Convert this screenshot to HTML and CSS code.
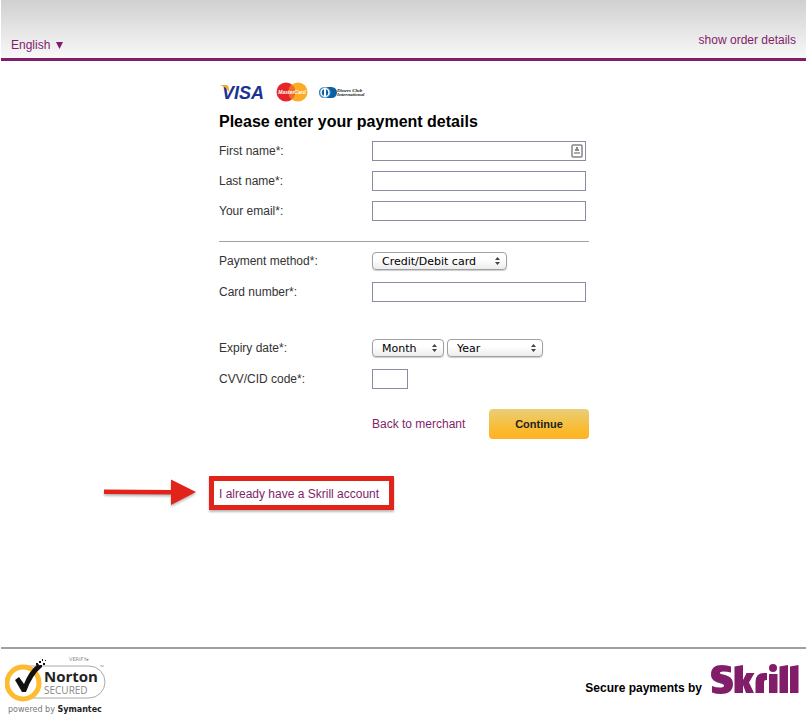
FILE: index.html
```html
<!DOCTYPE html>
<html lang="en">
<head>
<meta charset="utf-8">
<title>Skrill payment</title>
<link rel="stylesheet" href="styles.css">
</head>
<body>
<header class="top">
  <a class="language" href="#">English
    <svg width="7" height="7" viewBox="0 0 7 7" aria-hidden="true"><path d="M0 0h7L3.500 7z" fill="#821e69"/></svg>
  </a>
  <a class="order" href="#">show order details</a>
</header>
<main class="payment">
  <div class="brands">
    <svg width="46" height="20" viewBox="0 0 46 20" role="img" aria-label="Visa">
      <text x="3" y="17" class="visa">VISA</text>
      <path d="M1 3h6q2 0 2.500 2l1 5Q7 5 1 3z" fill="#f5a623"/>
    </svg>
    <svg width="32" height="20" viewBox="0 0 32 20" role="img" aria-label="MasterCard">
      <circle cx="10" cy="10" r="9.500" fill="#e5252a"/>
      <circle cx="22" cy="10" r="9.500" fill="#fbab26"/>
      <path d="M16 2.600a9.500 9.500 0 0 1 0 14.800a9.500 9.500 0 0 1 0-14.800" fill="#f26a25"/>
      <text x="16" y="12" class="mastercard">MasterCard</text>
    </svg>
    <svg width="46" height="20" viewBox="0 0 46 20" role="img" aria-label="Diners Club International">
      <rect x="0" y="5" width="18" height="11" rx="5.500" fill="#0b5fa5"/>
      <circle cx="6" cy="10.500" r="5" fill="#fff" stroke="#7fb0d6"/>
      <path d="M5 7.200a3.500 3.500 0 0 0 0 6.600zM7 7.200a3.500 3.500 0 0 1 0 6.600z" fill="#0b5fa5"/>
      <text x="18" y="10" class="diners">Diners Club</text>
      <text x="18" y="14" class="diners">International</text>
    </svg>
  </div>
  <h1>Please enter your payment details</h1>
  <form>
    <div class="row">
      <label for="first">First name*:</label>
      <div class="field">
        <input id="first" type="text">
        <svg class="contact" width="12" height="14" viewBox="0 0 12 14" aria-hidden="true">
          <rect x="1" y="1" width="10" height="12" rx="1" fill="#fff" stroke="#858585" stroke-width="1.500"/>
          <path d="M5 3h2v2h1v2H4V5h1z" fill="#8b8b8b"/><path d="M3 8h6v2H3z" fill="#aaa"/>
        </svg>
      </div>
    </div>
    <div class="row"><label for="last">Last name*:</label><input id="last" type="text"></div>
    <div class="row"><label for="email">Your email*:</label><input id="email" type="email"></div>
    <hr>
    <div class="row">
      <label for="method">Payment method*:</label>
      <div class="choice method"><select id="method"><option>Credit/Debit card</option></select><svg width="5" height="8" viewBox="0 0 5 8" aria-hidden="true"><path d="M0 3L2.500 0 5 3zM0 5h5L2.500 8z" fill="#444"/></svg></div>
    </div>
    <div class="row card"><label for="card">Card number*:</label><input id="card" type="text"></div>
    <div class="row expiry">
      <label for="month">Expiry date*:</label>
      <div class="dates">
        <div class="choice month"><select id="month"><option>Month</option></select><svg width="5" height="8" viewBox="0 0 5 8" aria-hidden="true"><path d="M0 3L2.500 0 5 3zM0 5h5L2.500 8z" fill="#444"/></svg></div>
        <div class="choice year"><select aria-label="Expiry year"><option>Year</option></select><svg width="5" height="8" viewBox="0 0 5 8" aria-hidden="true"><path d="M0 3L2.500 0 5 3zM0 5h5L2.500 8z" fill="#444"/></svg></div>
      </div>
    </div>
    <div class="row cvv"><label for="cvv">CVV/CID code*:</label><input id="cvv" class="short" type="text"></div>
    <div class="actions">
      <a href="#">Back to merchant</a>
      <button type="submit">Continue</button>
    </div>
  </form>
  <div class="account">
    <a href="#">I already have a Skrill account</a>
    <svg class="arrow" width="96" height="32" viewBox="0 0 96 32" aria-hidden="true">
      <path d="M1 13.500L68 14V3.500L93 16 68 29V18.500L1 18z" fill="#e2231a"/>
    </svg>
  </div>
</main>
<footer class="bottom">
  <svg class="norton" width="102" height="60" viewBox="0 0 102 60" role="img" aria-label="Norton Secured, powered by Symantec">
    <path d="M20 10H84a16 16 0 0 1 0 32H20" fill="#fff" stroke="#aaa"/>
    <circle cx="18" cy="27" r="16" fill="#fff" stroke="#fdbb30" stroke-width="5"/>
    <path d="M10 24l4-3 5 7Q24 15 33 8l4 3Q27 19 21 36h-4z" fill="#111"/>
    <path d="M31 7h2v2h-2zM34 5h2v2h-2zM37 3h1v2h-1zM38 7h2v2h-2zM35 9h2v2h-2zM40 4h1v1h-1z" fill="#111"/>
    <text x="64" y="5" class="verify">VERIFY▸</text>
    <text x="95" y="13" class="tm">™</text>
    <text x="39" y="26" class="norton-name">Norton</text>
    <text x="39" y="38" class="secured">SECURED</text>
    <text x="3" y="56" class="powered">powered by <tspan class="symantec">Symantec</tspan></text>
  </svg>
  <div class="secure">
    <strong>Secure payments by</strong>
    <svg width="88" height="30" viewBox="0 0 88 30" role="img" aria-label="Skrill" fill="#821e69">
      <path d="M20 2.500v6Q16 7.500 12 7.500 9 7.500 9 9C9 11.500 22 9.500 22 20 22 27 17 30 10 30Q5 30 1 28.500V22Q5 23.500 9 23.500 13 23.500 13 21.500C13 18.500 0 20 0 10.500 0 4 4 1 11 1Q16 1 20 2.500z"/>
      <path d="M23.500 2.500L32 1v15l3.500-7h8l-5.500 9.500L43 29h-8l-3-8v8h-8.500z"/>
      <path d="M44.500 29V18Q44.500 9 53 9h3v7h-1q-2 0-2 2v11z"/>
      <circle cx="62" cy="4" r="4"/>
      <path d="M58 10h8.500v19H58zM68.500 2.500L77 1v28h-8.500zM79 2.500L87.500 1v28H79z"/>
    </svg>
  </div>
</footer>
</body>
</html>
```
FILE: styles.css
```css
* { box-sizing: border-box; }
body {
  display: flex;
  flex-direction: column;
  min-height: 100vh;
  margin: 0 3px 0 1px;
  background: #fff;
  color: #333;
  font: 12px/16px "Liberation Sans", Arial, sans-serif;
}
a { color: #821e69; text-decoration: none; }
.top {
  display: flex;
  justify-content: space-between;
  align-items: flex-end;
  height: 61px;
  padding: 0 10px;
  background: linear-gradient(#d0d0d0, #f8f8f8);
  border-bottom: 3px solid #821e69;
}
.language { padding-bottom: 5px; }
.language svg { margin-left: 2px; }
.order { padding-bottom: 10px; }
.payment {
  flex: 1;
  width: 100%;
  max-width: 371px;
  margin: 0 auto;
  padding: 21px 0 0 1px;
}
.brands { display: flex; gap: 11px; height: 20px; }
.brands svg { overflow: visible; }
.visa { font: italic bold 18px "Liberation Sans", sans-serif; fill: #1a3491; }
.mastercard { font: italic bold 5px "Liberation Sans", sans-serif; fill: #fff; text-anchor: middle; }
.diners { font: italic bold 5px "Liberation Serif", serif; fill: #222; }
h1 { margin: 10px 0 4px; color: #000; font-size: 16px; line-height: 20px; }
.row {
  display: grid;
  grid-template-columns: 153px 1fr;
  align-items: center;
  height: 30px;
}
label { padding-bottom: 1px; }
input {
  display: block;
  width: 214px;
  height: 20px;
  margin: 0;
  padding: 0 4px;
  border: 1px solid #8a8aa5;
  border-radius: 0;
  background: #fff;
  font: inherit;
}
.short { width: 36px; }
.field { position: relative; width: 214px; }
.contact { position: absolute; right: 3px; top: 3px; }
hr { width: 100%; height: 1px; margin: 15px 0 4px; border: 0; background: #a0a0a0; }
.card { margin-top: 1px; }
.expiry { margin-top: 26px; }
.cvv { margin-top: 1px; }
.dates { display: flex; gap: 3px; }
.choice { position: relative; height: 18px; }
.choice svg { position: absolute; right: 7px; top: 5px; pointer-events: none; }
.method { width: 135px; }
.month { width: 72px; }
.year { width: 96px; }
select {
  display: block;
  appearance: none;
  width: 100%;
  height: 18px;
  margin: 0;
  padding: 1px 9px 0;
  border: 1px solid #a0a0a0;
  border-radius: 4px;
  background: linear-gradient(#fff, #fff 40%, #ececec);
  box-shadow: 0 1px 1px #ccc;
  color: #000;
  font: 11px/16px "Lucida Grande", "DejaVu Sans", sans-serif;
}
.actions {
  display: flex;
  justify-content: space-between;
  align-items: center;
  margin-top: 15px;
  padding-left: 153px;
}
button {
  width: 100px;
  height: 30px;
  padding: 0;
  border: 0;
  border-radius: 4px;
  background: linear-gradient(#e9cf78, #fbba2c 70%, #ffb225);
  color: #222;
  font: bold 11px/16px "Liberation Sans", Arial, sans-serif;
}
.account {
  position: relative;
  width: 185px;
  margin: 37px 0 0 -10px;
  padding: 5px 5px 3px;
  border: 5px solid #e2231a;
  box-shadow: 0 2px 2px #bbb;
  white-space: nowrap;
}
.arrow {
  position: absolute;
  right: 190px;
  top: -5px;
  filter: drop-shadow(0 2px 1px #bbb);
}
.bottom {
  display: flex;
  justify-content: space-between;
  align-items: flex-start;
  height: 75px;
  padding: 7px 7px 0 4px;
  border-top: 2px solid #a0a0a0;
}
.verify { font: 5px "DejaVu Sans", sans-serif; fill: #888; }
.tm { font: 5px "Open Sans", sans-serif; fill: #888; }
.norton-name { font: bold 15px "Open Sans", sans-serif; fill: #222; }
.secured { font: 10px "Open Sans", sans-serif; fill: #888; }
.powered { font: 8px "DejaVu Sans", sans-serif; fill: #777; }
.symantec { font-weight: bold; fill: #222; }
.secure { display: flex; align-items: flex-end; gap: 9px; padding-top: 8px; color: #000; }
.secure strong { line-height: 12px; }
```
